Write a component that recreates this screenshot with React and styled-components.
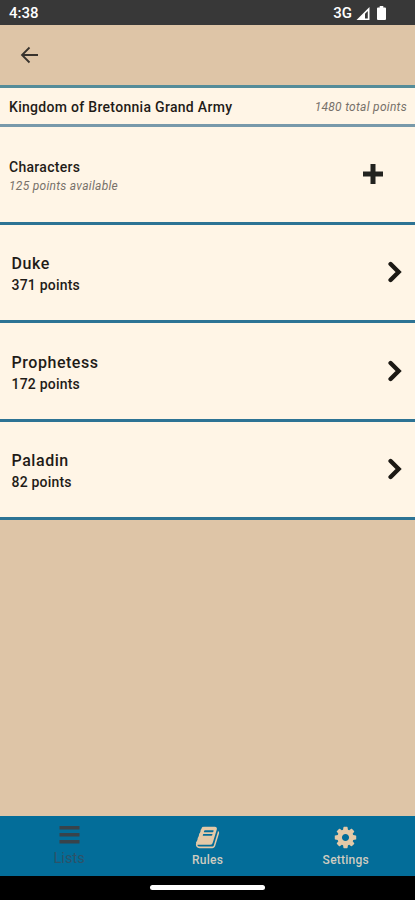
import React from "react";
import styled, { createGlobalStyle } from "styled-components";

const GlobalStyle = createGlobalStyle`
  body {
    margin: 0;
    background: #dec5a7;
    font-family: Roboto, "Liberation Sans", sans-serif;
  }
  * {
    box-sizing: border-box;
  }
`;

const Screen = styled.div`
  display: flex;
  flex-direction: column;
  width: 415px;
  height: 900px;
  overflow: hidden;
  color: #1f1c18;
  background: #dec5a7;

  svg {
    display: block;
    flex: none;
  }
`;

const StatusBar = styled.div`
  display: flex;
  align-items: center;
  height: 25px;
  padding: 1px 29px 0 9px;
  color: #fff;
  background: #383838;
  font-size: 15px;
  font-weight: 500;
  line-height: 20px;
`;

const StatusIcons = styled.div`
  display: flex;
  align-items: center;
  margin-left: auto;
`;

const SignalSlot = styled.div`
  margin: 0 7px 0 4px;
`;

const Header = styled.header`
  display: flex;
  align-items: center;
  height: 59.5px;
  padding-left: 20px;
`;

const ArmyBar = styled.div`
  display: flex;
  align-items: center;
  justify-content: space-between;
  height: 42.5px;
  padding: 2px 8px 0 9px;
  background: #fff5e6;
  border-top: 3px solid #548c99;
  border-bottom: 3px solid #7899aa;
`;

const Label = styled.div`
  font-size: ${(props) => props.$size || 14}px;
  font-weight: 500;
  line-height: ${(props) => props.$line || 20}px;
  letter-spacing: ${(props) => props.$spacing || 0}px;
  white-space: nowrap;
`;

const Note = styled.div`
  padding-top: 1px;
  color: #77716a;
  font-size: 12px;
  font-style: italic;
  line-height: 17px;
  letter-spacing: 0.28px;
  white-space: nowrap;
`;

const Section = styled.div`
  display: flex;
  align-items: center;
  justify-content: space-between;
  height: 98px;
  padding: 5px 32px 2px 9px;
  background: #fff5e6;
  border-bottom: 3px solid #2d7394;
`;

const UnitRow = styled(Section)`
  height: 98.4px;
  padding: 3px 13px 0 11.5px;
`;

const RowIcon = styled.div`
  margin-bottom: 4px;
`;

const Nav = styled.nav`
  display: flex;
  height: 60px;
  margin-top: auto;
  background: #036d99;
`;

const NavItem = styled.div`
  display: flex;
  flex: 1;
  flex-direction: column;
  align-items: center;
  padding-top: 9px;
  color: ${(props) => (props.$active ? "#38434b" : "#e4c9a7")};

  span {
    margin-top: ${(props) => (props.$active ? 3 : 1)}px;
    color: ${(props) => (props.$active ? "#2d5268" : "#cfccc0")};
    font-size: ${(props) => (props.$active ? 14.5 : 12)}px;
    font-weight: ${(props) => (props.$active ? 400 : 500)};
    line-height: 18px;
    letter-spacing: ${(props) => (props.$active ? 0.1 : 0.25)}px;
  }
`;

const HomeBar = styled.div`
  display: flex;
  justify-content: center;
  height: 24px;
  padding-top: 9px;
  background: #000;

  div {
    width: 115px;
    height: 5px;
    border-radius: 3px;
    background: #fff;
  }
`;

const units = [
  { name: "Duke", points: 371 },
  { name: "Prophetess", points: 172 },
  { name: "Paladin", points: 82 },
];

function BackArrow() {
  return (
    <svg width="19" height="18" viewBox="0 0 19 18" fill="none" stroke="#38332d" strokeWidth="1.8">
      <path d="M18 9H2.5M9.5 1.5L2 9l7.5 7.5" />
    </svg>
  );
}

function Signal() {
  return (
    <svg width="14" height="13" viewBox="0 0 14 13">
      <path d="M13.5 0v13H.5z" fill="#fff" />
      <path d="M11.8 4v7.4H9V6.8z" fill="#383838" />
    </svg>
  );
}

function Battery() {
  return (
    <svg width="9" height="14" viewBox="0 0 9 14" fill="#fff">
      <path d="M2.7 0h3.6v1.5H8a1 1 0 0 1 1 1V13a1 1 0 0 1-1 1H1a1 1 0 0 1-1-1V2.5a1 1 0 0 1 1-1h1.7z" />
    </svg>
  );
}

function Plus() {
  return (
    <svg width="20" height="20" viewBox="0 0 20 20">
      <path
        d="M10 2.5v15M2.5 10h15"
        stroke="#22221f"
        strokeWidth="5"
        strokeLinecap="square"
      />
    </svg>
  );
}

function Chevron() {
  return (
    <svg width="14" height="22" viewBox="0 0 14 22">
      <path d="M2.6 3L10.6 11l-8 8" fill="none" stroke="#1c1914" strokeWidth="4.4" strokeLinecap="round" />
    </svg>
  );
}

function Bars() {
  return (
    <svg width="23" height="22" viewBox="0 0 23 22" fill="currentColor">
      <path d="M1.5 1h20v3.5h-20zM1.5 8h20v3.5h-20zM1.5 15h20v3.5h-20z" />
    </svg>
  );
}

function Book() {
  return (
    <svg width="25" height="25" viewBox="0 0 1792 1792" fill="currentColor">
      <path d="M1703 478q40 57 18 129l-275 906q-19 64-76.5 107.5t-122.5 43.5h-923q-77 0-148.5-53.5t-99.5-131.5q-24-67-2-127 0-4 3-27t4-37q1-8-3-21.5t-3-19.5q2-11 8-21t16.5-23.5 16.5-23.5q23-38 45-91.5t30-91.5q3-10 .5-30t-.5-28q3-11 17-28t17-23q21-36 42-92t25-90q1-9-2.5-32t.5-28q4-13 22-30.5t22-22.5q19-26 42.5-84.5t27.5-96.5q1-8-3-25.5t-2-26.5q2-8 9-18t18-23 17-21q8-12 16.5-30.5t15-35 16-36 19.5-32 26.5-23.5 36-11.5 47.5 5.5l-1 3q38-9 51-9h761q74 0 114 56t18 130l-274 906q-36 119-71.5 153.5t-128.5 34.5h-869q-27 0-38 15-11 16-1 43 24 70 144 70h923q29 0 56-15.5t35-41.5l300-987q7-22 5-57 38 15 59 43zm-1064 2q-4 13 2 22.5t20 9.5h608q13 0 25.5-9.5t16.5-22.5l21-64q4-13-2-22.5t-20-9.5h-608q-13 0-25.5 9.5t-16.5 22.5zm-83 256q-4 13 2 22.5t20 9.5h608q13 0 25.5-9.5t16.5-22.5l21-64q4-13-2-22.5t-20-9.5h-608q-13 0-25.5 9.5t-16.5 22.5z" />
    </svg>
  );
}

function Cog() {
  return (
    <svg width="25" height="25" viewBox="0 0 1792 1792" fill="currentColor">
      <path d="M1152 896q0-106-75-181t-181-75-181 75-75 181 75 181 181 75 181-75 75-181zm512-109v222q0 12-8 23t-20 13l-185 28q-19 54-39 91 35 50 107 138 10 12 10 25t-9 23q-27 37-99 108t-94 71q-12 0-26-9l-138-108q-44 23-91 38-16 136-29 186-7 28-36 28h-222q-14 0-24.5-8.5t-11.5-21.5l-28-184q-49-16-90-37l-141 107q-10 9-25 9-14 0-25-11-126-114-165-168-7-10-7-23 0-12 8-23 15-21 51-66.5t54-70.5q-27-50-41-99l-183-27q-13-2-21-12.5t-8-23.5v-222q0-12 8-23t19-13l186-28q14-46 39-92-40-57-107-138-10-12-10-24 0-10 9-23 26-36 98.5-107.5t94.5-71.5q13 0 26 10l138 107q44-23 91-38 16-136 29-186 7-28 36-28h222q14 0 24.5 8.5t11.5 21.5l28 184q49 16 90 37l142-107q9-9 24-9 13 0 25 10 129 119 165 170 7 8 7 22 0 12-8 23-15 21-51 66.5t-54 70.5q26 50 41 98l183 28q13 2 21 12.5t8 23.5z" />
    </svg>
  );
}

function App() {
  return (
    <Screen>
      <GlobalStyle />
      <StatusBar>
        4:38
        <StatusIcons>
          3G
          <SignalSlot>
            <Signal />
          </SignalSlot>
          <Battery />
        </StatusIcons>
      </StatusBar>
      <Header>
        <BackArrow />
      </Header>
      <ArmyBar>
        <Label $spacing={0.3}>Kingdom of Bretonnia Grand Army</Label>
        <Note>1480 total points</Note>
      </ArmyBar>
      <Section>
        <div>
          <Label $spacing={0.3}>Characters</Label>
          <Note>125 points available</Note>
        </div>
        <RowIcon>
          <Plus />
        </RowIcon>
      </Section>
      {units.map((unit) => (
        <UnitRow key={unit.name}>
          <div>
            <Label $size={16} $line={22} $spacing={0.55}>
              {unit.name}
            </Label>
            <Label $spacing={0.2}>{unit.points} points</Label>
          </div>
          <RowIcon>
            <Chevron />
          </RowIcon>
        </UnitRow>
      ))}
      <Nav>
        <NavItem $active>
          <Bars />
          <span>Lists</span>
        </NavItem>
        <NavItem>
          <Book />
          <span>Rules</span>
        </NavItem>
        <NavItem>
          <Cog />
          <span>Settings</span>
        </NavItem>
      </Nav>
      <HomeBar>
        <div />
      </HomeBar>
    </Screen>
  );
}

export default App;
